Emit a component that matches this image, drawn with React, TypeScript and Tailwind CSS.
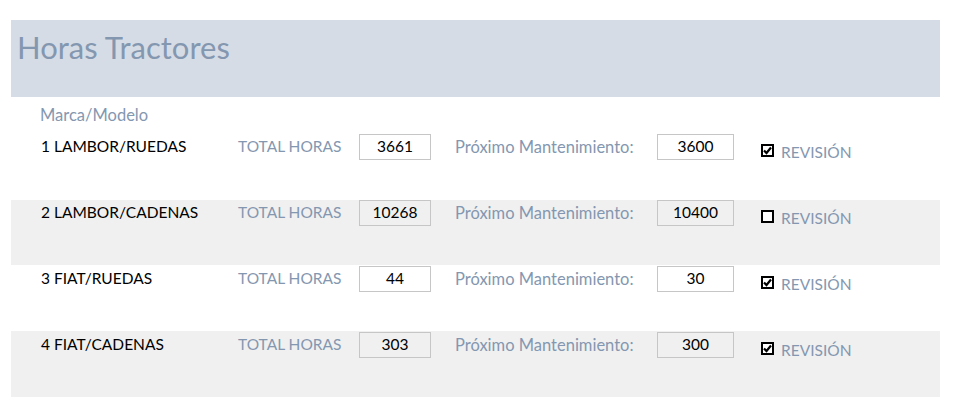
const rows = [
  { name: '1 LAMBOR/RUEDAS', total: '3661', next: '3600', checked: true },
  { name: '2 LAMBOR/CADENAS', total: '10268', next: '10400', checked: false },
  { name: '3 FIAT/RUEDAS', total: '44', next: '30', checked: true },
  { name: '4 FIAT/CADENAS', total: '303', next: '300', checked: true },
];

function CheckBox({ checked }: { checked: boolean }) {
  return (
    <span className="w-[13px] h-[13px] border-2 border-black bg-white flex items-center justify-center">
      {checked && (
        <svg width="9" height="9" viewBox="0 0 9 9">
          <path d="M1 4.5 L3.5 7 L8 1.5" stroke="black" strokeWidth="2.2" fill="none" />
        </svg>
      )}
    </span>
  );
}

function Row({ name, total, next, checked }: (typeof rows)[number]) {
  return (
    <div className="flex items-start h-[26px] pl-[30px] text-[15.5px]">
      <div className="w-[197px] h-[26px] flex items-center text-black">{name}</div>
      <div className="w-[121px] h-[26px] flex items-center text-[#8497b0]">TOTAL HORAS</div>
      <div className="w-[72px] h-[26px] border border-[#c6c6c6] flex items-center justify-center text-black">
        {total}
      </div>
      <div className="w-[202px] h-[26px] ml-[24px] flex items-center text-[16.5px] text-[#8497b0]">
        Próximo Mantenimiento:
      </div>
      <div className="w-[77px] h-[26px] border border-[#c6c6c6] flex items-center justify-center text-black">
        {next}
      </div>
      <div className="ml-[27px] mt-[10px]">
        <CheckBox checked={checked} />
      </div>
      <div className="ml-[7px] mt-[7px] text-[#8497b0]">REVISIÓN</div>
    </div>
  );
}

export default function App() {
  return (
    <div className="w-[959px] h-[408px] bg-white pt-5 pl-[11px] pr-[19px] font-['Lato',sans-serif]">
      <div className="h-[77px] bg-[#d6dce5] pl-[6px] pt-[4px] text-[31px] text-[#8497b0]">Horas Tractores</div>
      <div className="h-[103px] bg-white">
        <div className="pl-[29px] pt-[6px] h-[37px] text-[16.5px] text-[#8497b0]">Marca/Modelo</div>
        <Row {...rows[0]} />
      </div>
      <div className="h-[65px] bg-[#f0f0f0]">
        <Row {...rows[1]} />
      </div>
      <div className="h-[66px] bg-white pt-px">
        <Row {...rows[2]} />
      </div>
      <div className="h-[66px] bg-[#f0f0f0] pt-px">
        <Row {...rows[3]} />
      </div>
    </div>
  );
}
